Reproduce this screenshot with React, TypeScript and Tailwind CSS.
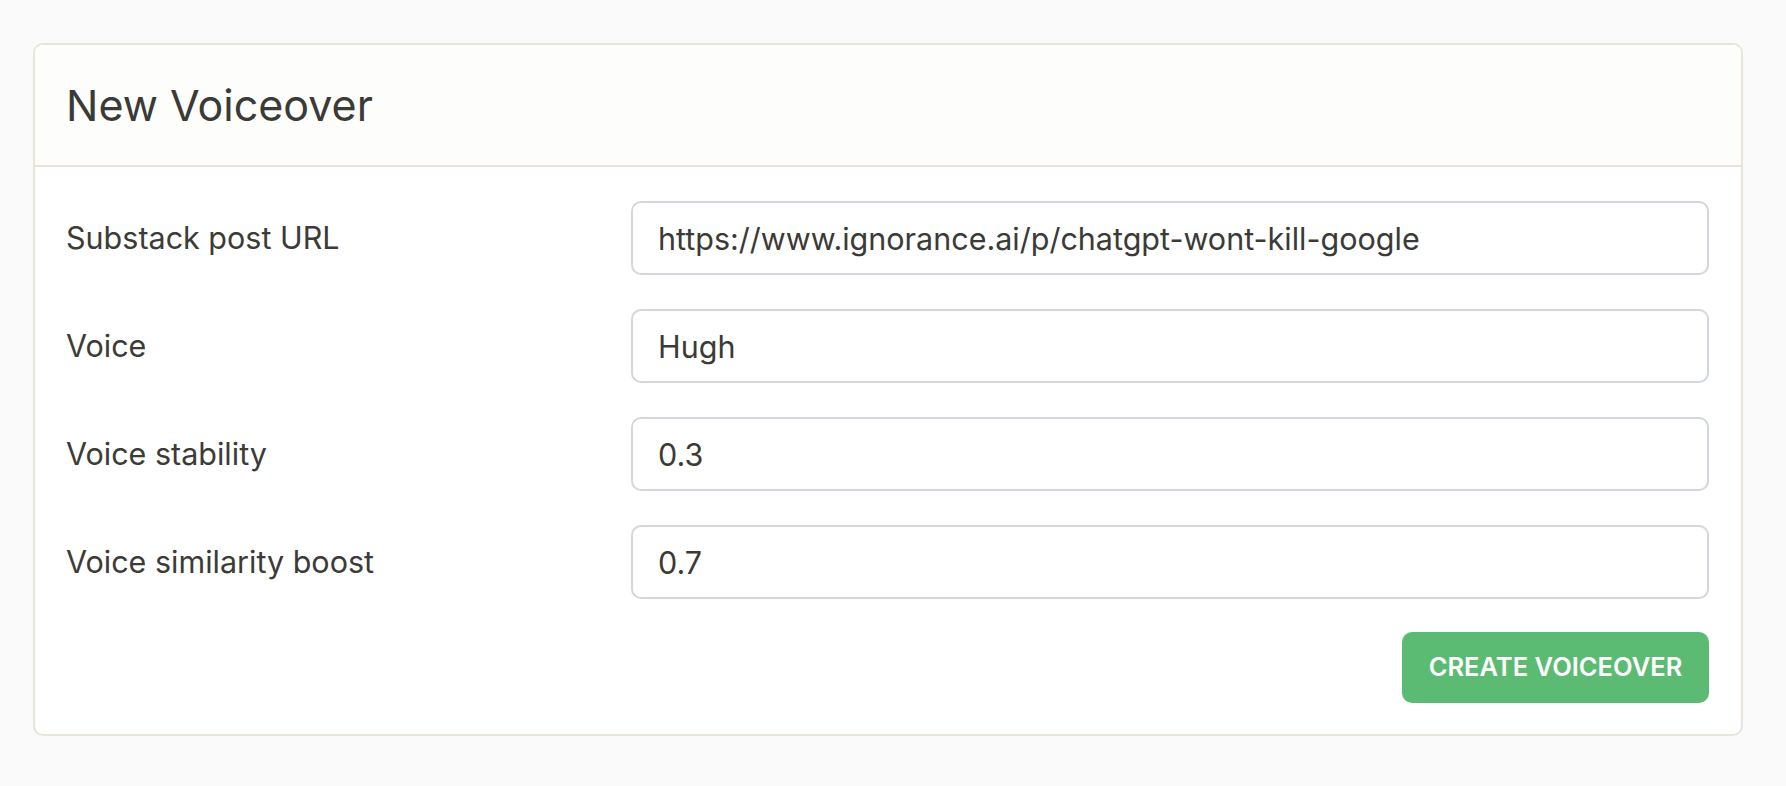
import React from "react";

const rows = [
  { label: "Substack post URL", value: "https://www.ignorance.ai/p/chatgpt-wont-kill-google" },
  { label: "Voice", value: "Hugh" },
  { label: "Voice stability", value: "0.3" },
  { label: "Voice similarity boost", value: "0.7" },
];

export default function App() {
  return (
    <div
      className="min-h-screen bg-[#fafafa] pt-[43px] pl-[33px] text-[#3b3b37]"
      style={{ fontFamily: "Inter, 'Liberation Sans', Arial, sans-serif" }}
    >
      <div className="w-[1710px] rounded-[10px] border-2 border-[#e9e4da] bg-white overflow-hidden">
        <div className="h-[122px] flex items-center px-[31px] bg-[#fdfdfb] border-b-2 border-[#ebe3da]">
          <h1 className="text-[43px] leading-none font-normal text-[#3a3a36]">New Voiceover</h1>
        </div>
        <div className="pt-[34px] pb-[31px] pl-[31px] pr-[32px] flex flex-col">
          <div className="flex flex-col gap-[34px]">
            {rows.map((r) => (
              <div key={r.label} className="grid grid-cols-[565px_1fr] items-center">
                <label className="text-[30.5px] leading-none">{r.label}</label>
                <input
                  readOnly
                  value={r.value}
                  className="h-[74px] w-full rounded-[10px] border-2 border-[#d2d7de] bg-white px-[25px] text-[30.5px] text-[#3a3a36] outline-none"
                  style={{ fontFamily: "Inter, 'Liberation Sans', Arial, sans-serif" }}
                />
              </div>
            ))}
          </div>
          <div className="mt-[33px] flex justify-end">
            <button
              className="w-[307px] h-[71px] rounded-[10px] bg-[#5cbb73] text-white text-[25.5px] font-semibold"
              style={{ fontFamily: "Inter, 'Liberation Sans', sans-serif" }}
            >
              CREATE VOICEOVER
            </button>
          </div>
        </div>
      </div>
    </div>
  );
}
